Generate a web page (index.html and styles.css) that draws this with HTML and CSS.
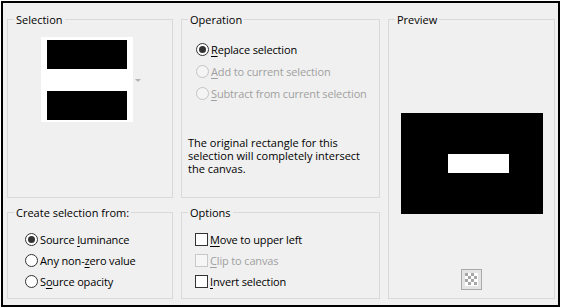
FILE: index.html
```html
<!DOCTYPE html>
<html>
<head>
<meta charset="utf-8">
<link rel="stylesheet" href="styles.css">
</head>
<body>
<div class="dialog">
  <fieldset class="group g-selection">
    <legend>Selection</legend>
    <div class="thumb-row">
      <div class="thumb">
        <div class="bar"></div>
        <div class="bar"></div>
      </div>
      <span class="drop-arrow"></span>
    </div>
  </fieldset>

  <fieldset class="group g-operation">
    <legend>Operation</legend>
    <div class="opts">
      <div class="opt"><span class="radio checked"></span><span><u>R</u>eplace selection</span></div>
      <div class="opt disabled"><span class="radio"></span><span><u>A</u>dd to current selection</span></div>
      <div class="opt disabled"><span class="radio"></span><span><u>S</u>ubtract from current selection</span></div>
    </div>
    <p class="note">The original rectangle for this selection will completely intersect the canvas.</p>
  </fieldset>

  <fieldset class="group g-preview">
    <legend>Preview</legend>
    <div class="preview-body">
      <div class="canvas"><div class="sel"></div></div>
      <svg class="checker" width="21" height="21" viewBox="0 0 21 21">
        <rect x="0.5" y="0.5" width="20" height="20" fill="#e4e4e4" stroke="#a9a9a9"/>
        <rect x="4" y="4" width="13" height="13" fill="#ffffff"/>
        <g fill="#a6a6a6">
          <rect x="4" y="4" width="3" height="3"/><rect x="10" y="4" width="3" height="3"/>
          <rect x="7" y="7" width="3" height="3"/><rect x="13" y="7" width="3" height="3"/>
          <rect x="4" y="10" width="3" height="3"/><rect x="10" y="10" width="3" height="3"/>
          <rect x="7" y="13" width="3" height="3"/><rect x="13" y="13" width="3" height="3"/>
        </g>
      </svg>
    </div>
  </fieldset>

  <fieldset class="group g-create">
    <legend>Create selection from:</legend>
    <div class="opts small">
      <div class="opt"><span class="radio checked"></span><span>Source <u>l</u>uminance</span></div>
      <div class="opt"><span class="radio"></span><span>Any non-<u>z</u>ero value</span></div>
      <div class="opt"><span class="radio"></span><span>S<u>o</u>urce opacity</span></div>
    </div>
  </fieldset>

  <fieldset class="group g-options">
    <legend>Options</legend>
    <div class="opts small">
      <div class="opt"><span class="check"></span><span><u>M</u>ove to upper left</span></div>
      <div class="opt disabled"><span class="check"></span><span><u>C</u>lip to canvas</span></div>
      <div class="opt"><span class="check"></span><span><u>I</u>nvert selection</span></div>
    </div>
  </fieldset>
</div>
</body>
</html>
```
FILE: styles.css
```css
* { box-sizing: border-box; }
html, body { margin: 0; padding: 0; background: #ffffff; }
body {
  font-family: "Open Sans", "Noto Sans", sans-serif;
  font-size: 11px;
  color: #000;
}
.dialog {
  margin: 1px;
  width: 559px;
  height: 306px;
  border: 2px solid #000;
  background: #f0f0f0;
  display: grid;
  grid-template-columns: 166px 199px 167px;
  grid-template-rows: 186px 94px;
  column-gap: 8px;
  row-gap: 7px;
  padding: 9px 0 0 4px;
}
.group {
  margin: 0;
  padding: 0;
  border: 1px solid #d9d9d9;
  min-width: 0;
  display: flex;
  flex-direction: column;
}
.group legend {
  margin-left: 6px;
  padding: 0 2px;
  line-height: 15px;
  height: 15px;
}
.g-selection { grid-column: 1; grid-row: 1; }
.g-operation { grid-column: 2; grid-row: 1; }
.g-preview { grid-column: 3; grid-row: 1 / span 2; }
.g-create { grid-column: 1; grid-row: 2; }
.g-options { grid-column: 2; grid-row: 2; }

/* selection thumbnail */
.thumb-row {
  display: flex;
  align-items: center;
  margin: 10px 0 0 33px;
}
.thumb {
  width: 92px;
  height: 85px;
  background: #fff;
  padding: 3px 6px 2px 6px;
  display: flex;
  flex-direction: column;
  justify-content: space-between;
}
.thumb .bar { height: 29px; background: #000; }
.drop-arrow {
  width: 0; height: 0;
  margin-left: 2px;
  margin-top: 2px;
  border-left: 3px solid transparent;
  border-right: 3px solid transparent;
  border-top: 3px solid #b4b4b4;
}

/* options */
.opts { display: flex; flex-direction: column; margin: 11px 0 0 14px; }
.opts.small { margin: 9px 0 0 17px; }
.opt {
  height: 22px;
  display: flex;
  align-items: center;
  gap: 2px;
  white-space: nowrap;
  letter-spacing: -0.15px;
}
.opts.small .opt { height: 21px; }
.g-options .opts.small { margin-left: 13px; }
.radio {
  width: 13px; height: 13px;
  border-radius: 50%;
  border: 1px solid #333;
  background: #fff;
  flex: none;
  display: flex;
  align-items: center;
  justify-content: center;
}
.radio.checked::after {
  content: "";
  width: 7px; height: 7px;
  border-radius: 50%;
  background: #333;
}
.check {
  width: 13px; height: 13px;
  border: 1px solid #333;
  background: #fff;
  flex: none;
}
.opt.disabled { color: #a0a0a0; }
.opt.disabled .radio { border-color: #c4c4c4; background: #f4f4f4; }
.opt.disabled .check { border-color: #c8c8c8; background: #f6f6f6; }
u { text-decoration-thickness: 1px; text-underline-offset: 2px; }

.note {
  margin: 32px 0 0 6px;
  line-height: 13px;
  width: 180px;
}

/* preview */
.preview-body {
  display: flex;
  flex-direction: column;
  align-items: center;
}
.canvas {
  margin-top: 86px;
  width: 142px;
  height: 101px;
  background: #000;
  padding: 41px 0 0 47px;
}
.canvas .sel { width: 61px; height: 19px; background: #fff; }
.checker { margin-top: 55px; display: block; }
```
